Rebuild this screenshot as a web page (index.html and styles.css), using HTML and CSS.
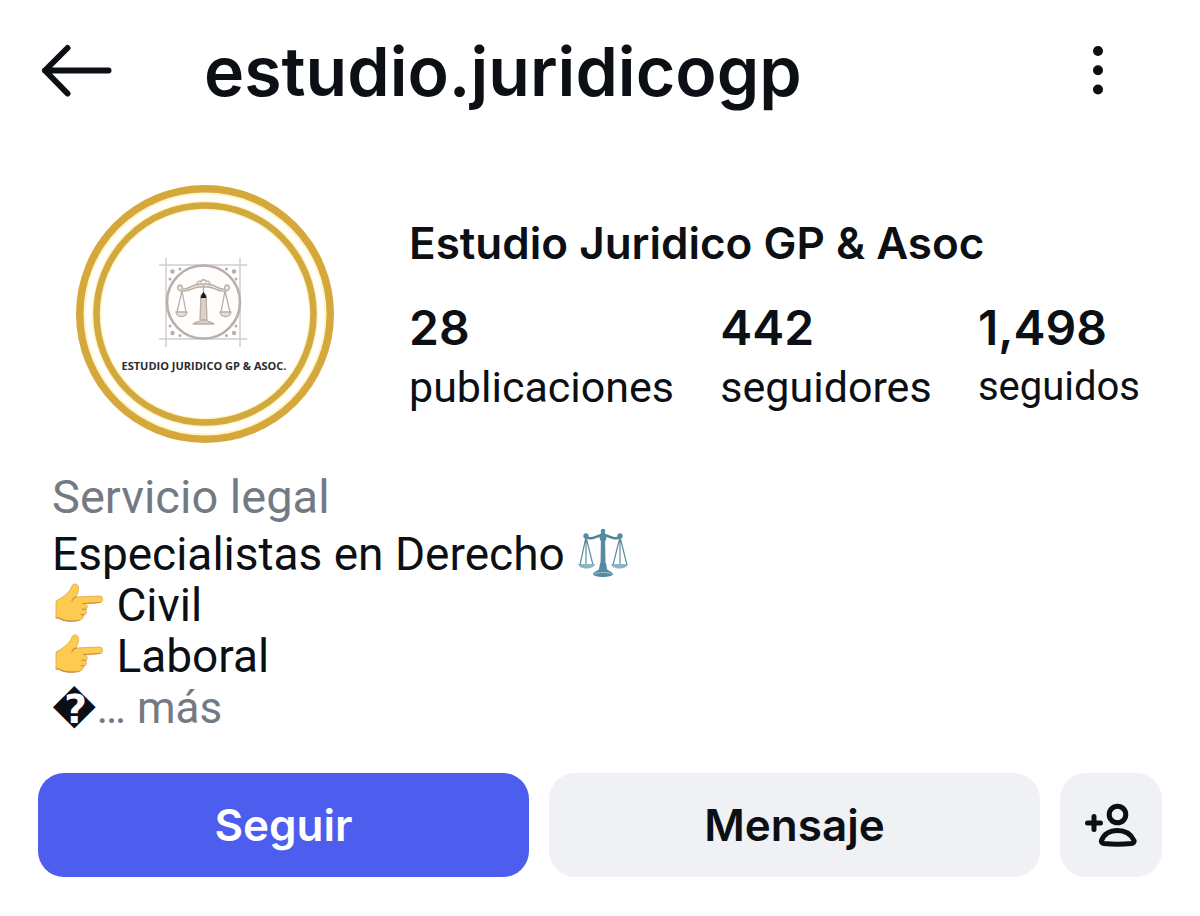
FILE: index.html
```html
<!DOCTYPE html>
<html lang="es">
<head>
<meta charset="utf-8">
<meta name="viewport" content="width=device-width, initial-scale=1">
<title>estudio.juridicogp</title>
<link rel="stylesheet" href="styles.css">
</head>
<body>
<header class="topbar">
  <button class="icon-button" type="button" aria-label="Atrás">
    <svg class="back-icon" viewBox="0 0 72 54" aria-hidden="true"><path d="M68.500 26.500H5M27.500 4L5 26.500L27.500 49.500" fill="none" stroke="currentColor" stroke-width="6" stroke-linecap="round" stroke-linejoin="round"/></svg>
  </button>
  <h1 class="username">estudio.juridicogp</h1>
  <button class="icon-button" type="button" aria-label="Más opciones">
    <svg class="more-icon" viewBox="0 0 12 50" aria-hidden="true"><g fill="currentColor"><circle cx="6" cy="5" r="5"/><circle cx="6" cy="24.200" r="5"/><circle cx="6" cy="43.500" r="5"/></g></svg>
  </button>
</header>
<main class="profile">
  <section class="summary">
    <svg class="avatar" viewBox="0 0 258 258" role="img" aria-label="Estudio Juridico GP &amp; Asoc.">
      <circle cx="129" cy="129" r="129" fill="#d6a83c"/>
      <circle cx="129" cy="129" r="121.500" fill="#fff6cf"/>
      <circle cx="129" cy="129" r="119.500" fill="#fffefa"/>
      <circle cx="129" cy="129" r="108.500" fill="#fff" stroke="#fff3bd" stroke-width="9"/>
      <circle cx="129" cy="129" r="108.500" fill="none" stroke="#d2a93f" stroke-width="6.500"/>
      <g fill="none" stroke="#d3cdc8" stroke-width="1.500">
        <path d="M83 80H171M83 154H171M90 73V162M164 73V162"/>
      </g>
      <circle cx="127.500" cy="117" r="36.500" fill="#fffefd" stroke="#b9b0ad" stroke-width="2.600"/>
      <g fill="#b9afaa">
        <circle cx="96.500" cy="86.500" r="2.200"/><circle cx="104" cy="84" r="1.500"/><circle cx="94" cy="94" r="1.500"/>
        <circle cx="158" cy="86.500" r="2.200"/><circle cx="150.500" cy="84" r="1.500"/><circle cx="160" cy="94" r="1.500"/>
        <circle cx="96.500" cy="148" r="2.200"/><circle cx="104" cy="150.500" r="1.500"/><circle cx="94" cy="141" r="1.500"/>
        <circle cx="158" cy="148" r="2.200"/><circle cx="150.500" cy="150.500" r="1.500"/><circle cx="160" cy="141" r="1.500"/>
      </g>
      <g fill="none" stroke="#bbaea4" stroke-width="1.300" stroke-linecap="round" stroke-linejoin="round">
        <path d="M106 106C101 106 100 101 104 100C106 100 107 102 106 104C113 105 116 99 123 99H132C139 99 142 105 149 104C148 102 149 100 151 100C155 101 154 106 149 106C141 107 138 102 132 102H123C117 102 114 107 106 106Z" fill="#eee7df"/>
        <path d="M122 100C120 97 123 95 125 97C125 94 130 94 130 97C132 95 135 97 133 100"/>
        <path d="M106 106L101 127M106 106L110 127M149 106L145 127M149 106L154 127"/>
        <path d="M100 127H111C110 133 101 133 100 127ZM144 127H155C154 133 145 133 144 127Z" fill="#e8e0d8"/>
        <path d="M125 110H130L131 135H124ZM117 139C121 136 124 137 125 135H130C131 137 134 136 138 139Z" fill="#ddd2c6"/>
        <path d="M127.500 99V109"/>
      </g>
      <path d="M124.500 113L126 109L127.500 107L129 109L130.500 113Z" fill="#171717"/>
      <text class="avatar-text" x="128" y="185" text-anchor="middle">ESTUDIO JURIDICO GP &amp; ASOC.</text>
    </svg>
    <div class="details">
      <h2 class="name">Estudio Juridico GP &amp; Asoc</h2>
      <ul class="stats">
        <li><a class="stat" href="#publicaciones"><strong class="count">28</strong><span class="label">publicaciones</span></a></li>
        <li><a class="stat" href="#seguidores"><strong class="count">442</strong><span class="label">seguidores</span></a></li>
        <li><a class="stat" href="#seguidos"><strong class="count">1,498</strong><span class="label small">seguidos</span></a></li>
      </ul>
    </div>
  </section>
  <svg class="defs" aria-hidden="true">
    <symbol id="point" viewBox="0 0 48 39">
      <path d="M1 18C7 15 12 11 15 7C17 4 17 1 20 1C24 1 24 6 23 9L21 14L44 13C49 13 49 19 45 19.500L30 21C33 22 33 26 30 26.500C33 29 31 32 28 32C29 35 27 37 23 37.500C15 39 8 38 4 35L1 35Z" fill="#fccb4f" stroke="#dfa546" stroke-width="0.800"/>
      <path d="M45 19.500L28 20.500M31 26.500L27 26M29 32L26 31.500M1 35H4C9 38.500 17 38.500 24 37.500M21 14C18 15 17 16 17 18" fill="none" stroke="#c98c45" stroke-width="1.200" stroke-linecap="round"/>
    </symbol>
  </svg>
  <section class="bio">
    <p class="category">Servicio legal</p>
    <p class="line">Especialistas en Derecho
      <svg class="scales" viewBox="0 0 50 50" role="img" aria-label="balanza">
        <g fill="none" stroke="#5e8da0" stroke-width="1.200"><path d="M8 9L2 37M8 9L15 37M8 9V37M42 9L35 37M42 9L49 37M42 9V37"/></g>
        <path d="M0 36H17C16 42 1 42 0 36ZM33 36H50C49 42 34 42 33 36Z" fill="#8eb4c3"/>
        <path d="M8 9C15 13 18 7 25 7C32 7 35 13 42 9" fill="none" stroke="#4f8298" stroke-width="2.500"/>
        <path d="M23 6H27L27.500 36H22.500Z" fill="#558ba1"/>
        <g fill="#558ba1"><circle cx="25" cy="3" r="2.300"/><circle cx="8" cy="8" r="2.700"/><circle cx="42" cy="8" r="2.700"/><ellipse cx="25" cy="9" rx="3.500" ry="4.500"/><path d="M22 35H28L29 41C30 43 35 44 35 46C35 50 15 50 15 46C15 44 20 43 21 41Z"/></g>
        <path d="M16 46C20 44 30 44 34 46" fill="none" stroke="#9cc0cd" stroke-width="1"/>
      </svg></p>
    <p class="line"><svg class="hand" role="img" aria-label="mano"><use href="#point"/></svg> Civil</p>
    <p class="line"><svg class="hand" role="img" aria-label="mano"><use href="#point"/></svg> Laboral</p>
    <p class="line"><span class="unknown">&#xFFFD;</span><a class="more" href="#bio">… más</a></p>
  </section>
  <div class="actions">
    <button class="action primary" type="button">Seguir</button>
    <button class="action" type="button">Mensaje</button>
    <button class="action square" type="button" aria-label="Agregar persona">
      <svg class="person-icon" viewBox="0 0 54 44" aria-hidden="true"><g fill="none" stroke="currentColor" stroke-width="5" stroke-linecap="round" stroke-linejoin="round"><circle cx="33.500" cy="11.500" r="8.300"/><path d="M3.500 20H16.500M10 13.500V26.500M17.500 37.500C20.500 30 26.500 27.500 33.500 27.500C40.500 27.500 46.500 30 50 37.500C50.500 39 49.500 40 47.500 40.500C38.500 41.500 28.500 41.500 20 40.500C18 40 17 39 17.500 37.500Z"/></g></svg>
    </button>
  </div>
</main>
</body>
</html>
```
FILE: styles.css
```css
* { box-sizing: border-box; }
body {
  margin: 0;
  background: #fff;
  color: #0c1014;
  font-family: Roboto, "Noto Sans", sans-serif;
}
h1, h2, p, ul { margin: 0; padding: 0; }
button { border: 0; padding: 0; background: none; color: inherit; font: inherit; cursor: pointer; }
a { color: inherit; text-decoration: none; }
svg { display: block; }

.username, .name, .count, .action { font-family: Inter, "Noto Sans", sans-serif; font-weight: 600; }

.topbar { display: flex; align-items: center; padding: 23px 96px 0 40px; }
.icon-button { display: flex; }
.back-icon { width: 72px; height: 54px; }
.more-icon { width: 12px; height: 50px; }
.username { flex: 1; margin-left: 92px; font-size: 68px; line-height: 96px; }

.summary { display: flex; gap: 75px; padding: 66px 60px 0 76px; }
.avatar { flex: none; width: 258px; height: 258px; }
.avatar-text { font: 700 11px "Open Sans", sans-serif; fill: #2b2b30; }
.details { flex: 1; padding-top: 30px; }
.name { font-size: 44px; line-height: 56px; }
.stats { display: flex; justify-content: space-between; padding-top: 25px; list-style: none; }
.stat { display: flex; flex-direction: column; }
.count { font-size: 48px; line-height: 64px; }
.label { font-size: 43px; line-height: 54px; }
.label.small { font-size: 40px; }

.defs { position: absolute; width: 0; height: 0; }
.bio { padding: 28px 52px 0; font-size: 46px; line-height: 51px; }
.category { padding-bottom: 6px; color: #737a83; font-size: 47px; }
.scales, .hand { display: inline-block; }
.scales { width: 50px; height: 50px; margin-left: 2px; vertical-align: -8px; }
.hand { width: 48px; height: 39px; margin: 0 2px 0 3px; vertical-align: -1px; }
.unknown { font-family: "DejaVu Sans", sans-serif; font-size: 40px; font-weight: 700; line-height: 1; }
.more { color: #737a83; font-size: 44px; }

.actions { display: flex; gap: 20px; padding: 39px 38px 40px; }
.action { flex: 1; height: 104px; border-radius: 26px; background: #f0f1f5; font-size: 44px; }
.primary { background: #4d5eef; color: #fff; }
.square { display: flex; flex: none; align-items: center; justify-content: center; width: 102px; }
.person-icon { width: 54px; height: 44px; }
```
